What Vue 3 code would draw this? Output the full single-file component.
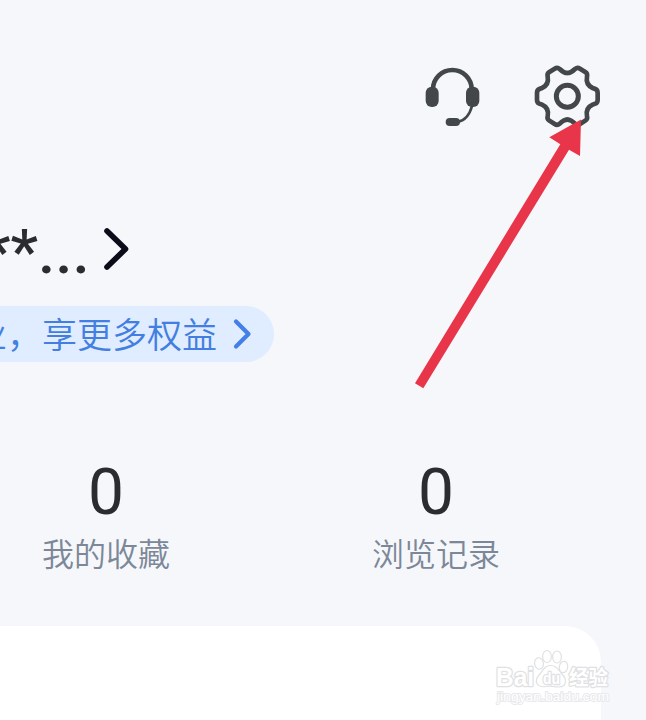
<template>
  <div class="profile">
    <header class="toolbar">
      <svg class="icon-service" viewBox="0 0 180 180" width="60" height="60">
        <path d="M39 75 V73 A58 58 0 0 1 155 73 V75" fill="none" stroke-width="14" />
        <path d="M156 123 C149 149 135 167 112 171" fill="none" stroke-width="8" />
        <rect class="solid" x="17" y="65" width="39" height="61" rx="18" />
        <rect class="solid" x="138" y="65" width="40" height="61" rx="18" />
        <rect class="solid" x="77" y="159" width="43" height="24" rx="12" />
      </svg>
      <svg class="icon-settings" viewBox="41 42 201 194" width="67" height="64.67">
        <path :d="gearHalf" />
        <path :d="gearHalf" transform="translate(282 0) scale(-1 1)" />
        <circle cx="141" cy="139" r="33" />
      </svg>
    </header>

    <div class="name-row">
      <span class="name">**...</span>
      <svg viewBox="0 0 28 46" width="28" height="46">
        <path d="M5 5 L23.5 23 L5 41" />
      </svg>
    </div>

    <div class="banner">
      <span class="banner-text">业，享更多权益</span>
      <svg viewBox="0 0 20 32" width="20" height="32">
        <path d="M4 3.5 L16.5 16 L4 28.5" />
      </svg>
    </div>

    <div class="stats">
      <div v-for="item in stats" :key="item.label" class="stat">
        <span class="count">{{ item.count }}</span>
        <span class="label">{{ item.label }}</span>
      </div>
    </div>

    <section class="card"></section>

    <svg class="arrow" viewBox="0 0 646 720" width="646" height="720">
      <path d="M581 119.5 L549.3 137.3 L560.3 144.3 L415 383.3 L423.3 388.3 L569 149.7 L580 156 Z" />
    </svg>

    <svg class="watermark" viewBox="0 0 120 62" width="120" height="62">
      <text class="brand" x="3" y="38" textLength="38" lengthAdjust="spacingAndGlyphs">Bai</text>
      <g class="paw">
        <ellipse cx="46" cy="15.5" rx="4.4" ry="5.8" transform="rotate(-12 46 15.5)" />
        <ellipse cx="54" cy="8.5" rx="4.4" ry="6" />
        <ellipse cx="64" cy="9" rx="4.4" ry="6" />
        <ellipse cx="70.5" cy="19" rx="4.2" ry="5.8" transform="rotate(10 70.5 19)" />
        <path d="M57.5 17.5 C64 17.5 65 22 69 26 C74 31 74 39 66 39 C61 39 59 37.5 54 38.5 C43 40 41 33 46 27 C50 23 51 17.5 57.5 17.5 Z" />
      </g>
      <text class="du" x="50" y="36" textLength="17" lengthAdjust="spacingAndGlyphs">du</text>
      <text class="cn" x="76" y="36.5" textLength="39" lengthAdjust="spacingAndGlyphs">经验</text>
      <text class="url" x="4" y="53" textLength="112" lengthAdjust="spacingAndGlyphs">jingyan.baidu.com</text>
    </svg>
  </div>
</template>

<script setup>
// right half of the gear outline, mirrored for the left side
const gearHalf =
  'M141 69 C152 69 158 63 164 57 Q171 51 179 56 L196 67 Q202 71 200 80 ' +
  'C197 96 201 107 217 114 L225 117 Q232 120 232 129 V149 Q232 158 225 161 ' +
  'L217 164 C201 171 197 182 200 198 Q202 207 196 211 L179 222 Q171 227 164 221 ' +
  'C158 215 152 209 141 209'

const stats = [
  { label: '我的收藏', count: 0 },
  { label: '浏览记录', count: 0 }
]
</script>

<style>
body {
  margin: 0;
  background: #f5f7fb;
}
</style>

<style scoped>
.profile {
  position: relative;
  display: flex;
  flex-direction: column;
  align-items: flex-start;
  width: 646px;
  height: 720px;
  overflow: hidden;
  background: #f5f7fb;
  font-family: Roboto, "Noto Sans CJK SC", sans-serif;
}

.toolbar {
  display: flex;
  align-self: stretch;
  justify-content: flex-end;
  align-items: flex-start;
  gap: 54px;
  height: 66px;
  padding: 64px 45px 0 0;
}

.toolbar svg {
  overflow: visible;
  stroke: #43474a;
}

.icon-service {
  margin-top: 1px;
}

.icon-service .solid {
  fill: #43474a;
  stroke: none;
}

.icon-settings {
  fill: none;
  stroke-width: 14;
  stroke-linecap: round;
}

.icon-settings circle {
  stroke-width: 15;
}

.name-row {
  display: flex;
  align-items: center;
  height: 80px;
  margin: 79px 0 0 -17px;
}

.name {
  color: #2a2c30;
  font-size: 62px;
  font-weight: 500;
  line-height: 80px;
  padding-top: 6px;
}

.name-row svg {
  margin-left: 12px;
  fill: none;
  stroke: #0b0b19;
  stroke-width: 5.6;
  stroke-linecap: round;
  stroke-linejoin: round;
}

.banner {
  display: flex;
  align-items: center;
  height: 56px;
  margin: 17px 0 0 -28px;
  padding-right: 22px;
  border-radius: 0 28px 28px 0;
  background: #e0ecff;
}

.banner-text {
  color: #427fe0;
  font-family: "Noto Sans CJK SC", sans-serif;
  font-size: 35px;
  font-weight: 350;
  line-height: 54px;
  padding-bottom: 2px;
}

.banner svg {
  margin-left: 15px;
  fill: none;
  stroke: #427fe8;
  stroke-width: 4.2;
  stroke-linecap: round;
  stroke-linejoin: round;
}

.stats {
  display: flex;
  margin: 92px 0 0 -59px;
}

.stat {
  display: flex;
  flex-direction: column;
  align-items: center;
  width: 330px;
}

.count {
  color: #2a2c30;
  font-size: 64px;
  line-height: 78px;
}

.label {
  margin-top: -3px;
  color: #7c8798;
  font-family: "Noto Sans CJK SC", sans-serif;
  font-size: 32px;
  font-weight: 350;
  line-height: 46px;
}

.card {
  flex: 1;
  width: 601px;
  margin-top: 51px;
  border-radius: 0 36px 0 0;
  background: #fff;
}

.arrow {
  position: absolute;
  top: 0;
  left: 0;
  fill: #e93549;
}

.watermark {
  position: absolute;
  top: 648px;
  left: 493px;
  overflow: visible;
  font-family: "Liberation Sans", "Noto Sans CJK SC", sans-serif;
  fill: #fff;
  stroke: #e0e1e3;
  stroke-width: 1.2;
}

.watermark text {
  paint-order: stroke;
  stroke-width: 2.6;
  stroke-linejoin: round;
}

.watermark .brand {
  font-size: 26px;
  font-weight: 700;
}

.watermark .du {
  font-size: 16px;
  font-weight: 700;
}

.watermark .cn {
  font-size: 20px;
  font-weight: 700;
}

.watermark .url {
  font-size: 13.5px;
  stroke: #e8e9eb;
  stroke-width: 2;
}
</style>
